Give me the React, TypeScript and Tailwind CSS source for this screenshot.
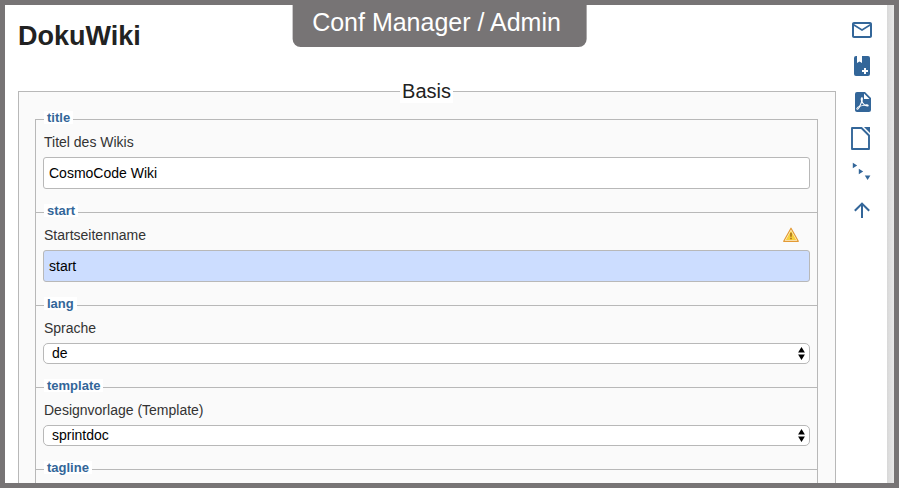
import type { ReactNode } from "react";

type Setting = {
  key: string;
  label?: string;
  value: string;
  type: "text" | "select";
  danger?: boolean;
};

const settings: Setting[] = [
  { key: "title", label: "Titel des Wikis", value: "CosmoCode Wiki", type: "text" },
  { key: "start", label: "Startseitenname", value: "start", type: "text", danger: true },
  { key: "lang", label: "Sprache", value: "de", type: "select" },
  { key: "template", label: "Designvorlage (Template)", value: "sprintdoc", type: "select" },
  { key: "tagline", value: "", type: "text" },
];

function WarningIcon() {
  return (
    <svg viewBox="0 0 16 16" className="w-4 h-4 mr-[11px]" role="img" aria-label="Warnung">
      <path d="M8 1.200 15.300 14.300H.7Z" fill="#fff3cf" stroke="#e39a35" strokeWidth="1.200" strokeLinejoin="round" />
      <path d="M8 3.800 13.200 13H2.800Z" fill="#f7cf3c" />
      <path d="M7.100 5.800h1.800v4H7.100zM7.100 10.700h1.800v1.500H7.100z" fill="#b07a1e" />
    </svg>
  );
}

function SelectArrows() {
  return (
    <svg viewBox="0 0 7 13" className="absolute right-[5px] top-1 w-[7px] h-[13px] pointer-events-none" aria-hidden="true">
      <path d="M3.500 0 6.900 5.500H.1ZM.1 7.500h6.800L3.500 13Z" fill="#000" />
    </svg>
  );
}

function SettingRow({ setting }: { setting: Setting }) {
  const { key, label, value, type, danger } = setting;

  return (
    <fieldset className="-mt-2 first-of-type:mt-0 min-w-0 border border-b-0 last:border-b border-[#b8b8b8] px-[7px] pb-[23px]">
      <legend className="ml-px h-[17px]">
        <span className="block h-[13px] bg-white px-[3px] text-[13px] leading-[13px] font-bold text-[#336699]">
          {key}
        </span>
      </legend>
      <div className="flex items-center justify-between h-7 mb-px pl-px">
        {label && (
          <label htmlFor={key} className="leading-5 text-[#333]">
            {label}
          </label>
        )}
        {danger && <WarningIcon />}
      </div>
      {type === "text" ? (
        <input
          id={key}
          type="text"
          aria-label={label ? undefined : key}
          defaultValue={value}
          className={`block w-full h-8 rounded-[3px] border border-[#b8b8b8] px-[5px] text-black ${
            danger ? "bg-[#ccddff]" : "bg-white"
          }`}
        />
      ) : (
        <div className="relative">
          <select
            id={key}
            defaultValue={value}
            className="block w-full h-[21px] appearance-none rounded-[5px] border border-[#b8b8b8] bg-white px-2 leading-[19px] text-black"
          >
            <option>{value}</option>
          </select>
          <SelectArrows />
        </div>
      )}
    </fieldset>
  );
}

function Tool({ label, children }: { label: string; children: ReactNode }) {
  return (
    <a href="#" aria-label={label} className="block w-6 h-6">
      <svg viewBox="0 0 24 24" className="w-6 h-6 overflow-visible" fill="currentColor">
        {children}
      </svg>
    </a>
  );
}

function PageTools() {
  return (
    <nav className="flex flex-col gap-3 w-[51px] pt-[13px] pl-[14px] text-[#336699]">
      <Tool label="Seite per E-Mail senden">
        <path d="M22 6c0-1.1-.9-2-2-2H4c-1.1 0-2 .9-2 2v12c0 1.1.9 2 2 2h16c1.1 0 2-.9 2-2V6m-2 0-8 5-8-5h16m0 12H4V8l8 5 8-5v10Z" />
      </Tool>
      <Tool label="Zum Buch hinzufügen">
        <path
          fillRule="evenodd"
          d="M6 2h1v7l2.5-1.5L12 9V2h6a2 2 0 0 1 2 2v16a2 2 0 0 1-2 2H6a2 2 0 0 1-2-2V4a2 2 0 0 1 2-2Zm8 12v2h-2v2h2v2h2v-2h2v-2h-2v-2Z"
        />
      </Tool>
      <Tool label="Als PDF exportieren">
        <path d="M14,9H19.5L14,3.5V9M7,2H15L21,8V20A2,2 0 0,1 19,22H7C5.89,22 5,21.1 5,20V4A2,2 0 0,1 7,2M11.93,12.44C12.34,13.34 12.86,14.08 13.46,14.59L13.87,14.91C13,15.07 11.8,15.35 10.53,15.84L10.42,15.88L10.92,14.84C11.37,13.97 11.7,13.18 11.93,12.44M18.41,16.25C18.59,16.07 18.68,15.84 18.69,15.59C18.72,15.39 18.67,15.2 18.57,15.04C18.28,14.57 17.53,14.35 16.29,14.35L15,14.42L14.13,13.84C13.5,13.32 12.93,12.41 12.53,11.28L12.57,11.14C12.9,9.81 13.21,8.2 12.55,7.54C12.39,7.38 12.17,7.3 11.94,7.3H11.7C11.33,7.3 11,7.69 10.91,8.07C10.54,9.4 10.76,10.13 11.13,11.34C10.88,12.23 10.56,13.25 10.05,14.28L9.09,16.08L8.2,16.57C7,17.32 6.43,18.16 6.32,18.69C6.28,18.88 6.3,19.05 6.37,19.23L6.4,19.28L6.88,19.59L7.32,19.7C8.13,19.7 9.05,18.75 10.29,16.63L10.47,16.56C11.5,16.23 12.78,16 14.5,15.81C15.53,16.32 16.74,16.55 17.5,16.55C17.94,16.55 18.24,16.44 18.41,16.25M8.83,17C8.18,18.19 7.59,18.85 7.14,19C7.19,18.62 7.64,17.96 8.35,17.31L8.83,17Z" />
      </Tool>
      <Tool label="Als ODT exportieren">
        <path d="M2 2h9.500L19 9.500V23H2Z" fill="none" stroke="currentColor" strokeWidth="1.900" strokeLinejoin="round" />
        <path d="M14 1h6v6Z" />
      </Tool>
      <Tool label="Alles ein-/ausklappen">
        <path d="M2.800 .8l4.400 2.700-4.400 2.700ZM8.800 6.800l4.400 2.700-4.400 2.700ZM14.800 13.500h5.600l-2.800 4.500Z" />
      </Tool>
      <Tool label="Nach oben">
        <path d="M13 20h-2V8l-5.500 5.500-1.420-1.420L12 4.160l7.920 7.920-1.420 1.420L13 8v12Z" />
      </Tool>
    </nav>
  );
}

export default function App() {
  return (
    <div className="relative flex h-screen overflow-hidden border-[5px] border-[#777475] bg-white font-['Liberation_Sans',Arial,sans-serif] text-sm text-[#333]">
      <div className="absolute top-0 left-1/2 -translate-x-1/2 -ml-2.5 h-[42px] whitespace-nowrap rounded-b-lg bg-[#777475] pl-5 pr-[26px] text-[25px] leading-[34px] text-white">
        Conf Manager / Admin
      </div>

      <main className="flex-1 min-w-0 pl-[13px]">
        <h1 className="h-[74px] pt-[15px] text-[27px] leading-[32px] font-bold text-[#222]">
          DokuWiki
        </h1>
        <fieldset className="min-w-0 border border-[#b8b8b8] bg-[#fafafa] pt-2 pr-[17px] pb-4 pl-4">
          <legend className="mx-auto h-6 bg-white px-0.5 text-xl leading-6 text-[#222]">Basis</legend>
          {settings.map((s) => (
            <SettingRow key={s.key} setting={s} />
          ))}
        </fieldset>
      </main>

      <PageTools />
      <div className="w-[7px] bg-linear-to-r from-[#d8d8d8] to-[#e8e8e8]" />
    </div>
  );
}
